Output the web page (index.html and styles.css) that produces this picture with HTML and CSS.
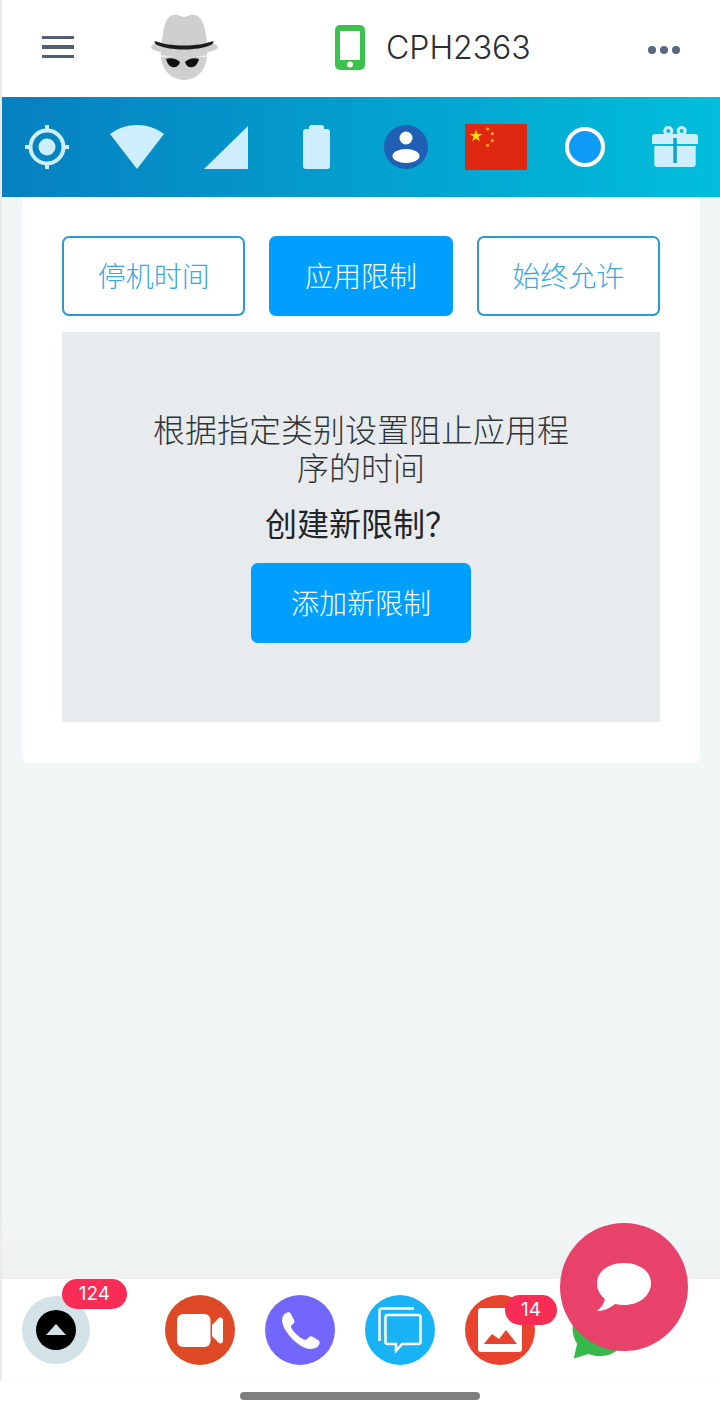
FILE: index.html
```html
<!DOCTYPE html>
<html lang="zh-CN">
<head>
    <meta charset="UTF-8">
    <title>应用限制</title>
    <link rel="stylesheet" href="styles.css">
</head>
<body>
    <div class="app">
        <header class="topbar">
            <button class="menu-btn"><span></span><span></span><span></span></button>
            <svg class="spy" width="67" height="66" viewBox="0 0 67 66">
                <path d="M11 30 C12 16 14 3 22 1 C27 0 29 3 33 3 C37 3 39 0 44 1 C52 3 55 16 56 30 Z" fill="#cfcfcf"/>
                <path d="M10 38 H56 C57 55 46 66 33 66 C20 66 9 55 10 38 Z" fill="#cfcfcf"/>
                <ellipse cx="33.500" cy="33" rx="33.500" ry="7.500" fill="#cfcfcf"/>
                <path d="M4 27 C18 33 48 33 62 27 C63 28 62 30 60 31 C46 37 20 37 6 31 C4 30 3 28 4 27 Z" fill="#1c1c1c"/>
                <path d="M10 41 C24 44 42 44 56 41 V43 H10 Z" fill="#eeeeee"/>
                <path d="M15 45 C20 43 26 45 29 48 C28 52 25 54 21 53 C18 52 16 49 15 45 Z M34 48 C37 45 43 43 48 45 C47 49 45 52 42 53 C38 54 35 52 34 48 Z" fill="#111"/>
            </svg>
            <div class="device">
                <svg width="30" height="45" viewBox="0 0 30 45">
                    <rect x="0" y="0" width="30" height="45" rx="5" fill="#3cc04e"/>
                    <rect x="5" y="6" width="20" height="29" fill="#fff"/>
                    <circle cx="15" cy="39.500" r="3" fill="#fff"/>
                </svg>
                <span class="device-name">CPH2363</span>
            </div>
            <div class="more"><i></i><i></i><i></i></div>
        </header>

        <nav class="status">
            <svg width="46" height="46" viewBox="0 0 46 46">
                <circle cx="23" cy="23" r="16.500" fill="none" stroke="#cdeefa" stroke-width="4"/>
                <circle cx="23" cy="23" r="8.500" fill="#cdeefa"/>
                <path d="M23 1 V7 M23 39 V45 M1 23 H7 M39 23 H45" stroke="#cdeefa" stroke-width="4"/>
            </svg>
            <svg width="54" height="44" viewBox="0 0 54 44">
                <path d="M0 9 C16 -3 38 -3 54 9 L27 44 Z" fill="#cdeefa"/>
            </svg>
            <svg width="44" height="44" viewBox="0 0 44 44">
                <path d="M44 1 V44 H0 Z" fill="#cdeefa"/>
            </svg>
            <svg width="27" height="44" viewBox="0 0 27 44">
                <path d="M6 2 C6 1 7 0 8 0 H19 C20 0 21 1 21 2 V4 H24 C26 4 27 5 27 7 V41 C27 43 26 44 24 44 H3 C1 44 0 43 0 41 V7 C0 5 1 4 3 4 H6 Z" fill="#cdeefa"/>
            </svg>
            <svg width="44" height="44" viewBox="0 0 44 44">
                <circle cx="22" cy="22" r="22" fill="#1f5fb4"/>
                <circle cx="22" cy="13" r="6.500" fill="#fff"/>
                <ellipse cx="22" cy="31" rx="13.500" ry="7" fill="#fff"/>
            </svg>
            <svg width="62" height="46" viewBox="0 0 62 46">
                <rect width="62" height="46" fill="#de2910"/>
                <path d="M11 5.500 L12.500 10 H17.200 L13.400 12.800 L14.800 17.300 L11 14.500 L7.200 17.300 L8.600 12.800 L4.800 10 H9.500 Z" fill="#ffde00"/>
                <circle cx="22.700" cy="5" r="1.600" fill="#f5a623"/>
                <circle cx="27.300" cy="9.700" r="1.600" fill="#f5a623"/>
                <circle cx="27.300" cy="16.700" r="1.600" fill="#f5a623"/>
                <circle cx="22.700" cy="21.300" r="1.600" fill="#f5a623"/>
            </svg>
            <svg width="40" height="40" viewBox="0 0 40 40">
                <circle cx="20" cy="20" r="18" fill="#0d9bf5" stroke="#fff" stroke-width="4"/>
            </svg>
            <svg width="46" height="42" viewBox="0 0 46 42">
                <circle cx="16.300" cy="5" r="3.500" fill="none" stroke="#cdeefa" stroke-width="3"/>
                <circle cx="29.700" cy="5" r="3.500" fill="none" stroke="#cdeefa" stroke-width="3"/>
                <path d="M3 8 H43 C45 8 46 9 46 11 V18 H0 V11 C0 9 1 8 3 8 Z" fill="#cdeefa"/>
                <path d="M2.300 20 H43.700 V38 C43.700 40 42.700 41 40.700 41 H5.300 C3.300 41 2.300 40 2.300 38 Z" fill="#cdeefa"/>
                <rect x="21.300" y="12" width="3.500" height="25" fill="#0aa3cc"/>
            </svg>
        </nav>

        <main class="content">
            <section class="card">
                <div class="tabs">
                    <a class="tab">停机时间</a>
                    <a class="tab active">应用限制</a>
                    <a class="tab">始终允许</a>
                </div>
                <div class="panel">
                    <p class="panel-text">根据指定类别设置阻止应用程序的时间</p>
                    <p class="panel-ask">创建新限制？</p>
                    <button class="add-btn">添加新限制</button>
                </div>
            </section>
        </main>

        <footer class="dock">
            <div class="dock-item">
                <div class="up-btn"><span></span></div>
                <span class="badge badge-big">124</span>
            </div>
            <div class="apps">
                <div class="app-icon video">
                    <svg width="46" height="33" viewBox="0 0 46 33">
                        <rect x="0" y="0" width="33.500" height="33" rx="6" fill="#fff"/>
                        <path d="M35 11 L42 4 C44 3 46 4 46 6 V27 C46 29 44 30 42 29 L35 22 Z" fill="#fff"/>
                    </svg>
                </div>
                <div class="app-icon phone">
                    <svg width="40" height="37" viewBox="0 0 40 37">
                        <path d="M6 1 C8 0 10 0 11 2 L14 8 C15 10 14 11 13 12 L11 14 C11 16 13 19 16 22 C19 25 24 28 26 28 L29 25 C30 24 32 24 33 25 L38 28 C40 29 40 31 39 33 C37 36 33 37 30 37 C20 37 3 20 2 9 C2 5 3 3 6 1 Z" fill="#fff"/>
                    </svg>
                </div>
                <div class="app-icon chat">
                    <svg width="44" height="46" viewBox="0 0 44 46">
                        <path d="M1.500 34 V4 C1.500 2 2 1.500 4 1.500 H36" fill="none" stroke="#fff" stroke-width="2.500"/>
                        <path d="M10 8 H40 C42 8 42.500 8.500 42.500 10 V35 C42.500 36.500 42 37 40 37 H24 L18 44 V37 H10 C8 37 7.500 36.500 7.500 35 V10 C7.500 8.500 8 8 10 8 Z" fill="none" stroke="#fff" stroke-width="2.500"/>
                    </svg>
                </div>
                <div class="app-icon gallery">
                    <svg width="44" height="44" viewBox="0 0 44 44">
                        <rect x="0" y="0" width="44" height="44" rx="3" fill="#fff"/>
                        <path d="M5.700 36 L14 26 L21 31 L28 22 L39 36 Z" fill="#e8432d"/>
                    </svg>
                    <span class="badge badge-small">14</span>
                </div>
                <div class="app-icon whatsapp">
                    <svg width="64" height="64" viewBox="0 0 56 56">
                        <path d="M28 3 C14 3 4 14 4 27 C4 32 6 37 8 40 L5 53 L18 49 C21 50 24 51 28 51 C42 51 52 40 52 27 C52 14 42 3 28 3 Z" fill="#36b94a"/>
                    </svg>
                </div>
            </div>
        </footer>
        <div class="home-area"><span class="home-bar"></span></div>

        <button class="fab">
            <svg width="54" height="48" viewBox="0 0 54 48">
                <path d="M27 0 C42 0 54 8 54 20 C54 33 42 42 27 42 C24 42 21 41.500 18 41 C13 45 7 48 0 48 C4 45 7 41 8 36 C3 32 0 27 0 20 C0 8 12 0 27 0 Z" fill="#fff"/>
            </svg>
        </button>
    </div>
</body>
</html>
```

FILE: styles.css
```css
* {
    box-sizing: border-box;
}

body {
    margin: 0;
    font-family: "Noto Sans CJK SC", "Noto Sans", sans-serif;
    font-weight: 300;
    background-color: #fff;
}

.app {
    position: relative;
    width: 720px;
    height: 1414px;
    display: flex;
    flex-direction: column;
    overflow: hidden;
}

.topbar, .status, .content, .dock {
    border-left: 2px solid #e9ebec;
}

/* top bar */
.topbar {
    height: 97px;
    background-color: #fff;
    display: flex;
    align-items: center;
    padding: 0 40px 3px 40px;
}

.menu-btn {
    width: 32px;
    display: flex;
    flex-direction: column;
    gap: 6px;
    padding: 0;
    border: none;
    background: none;
}

.menu-btn span {
    height: 3.500px;
    background-color: #525f73;
}

.spy {
    margin-left: 77px;
}

.device {
    display: flex;
    align-items: center;
    gap: 21px;
    margin-left: 117px;
}

.device-name {
    font-family: Inter, sans-serif;
    font-size: 32px;
    font-weight: 300;
    color: #2b2f33;
}

.more {
    display: flex;
    gap: 4px;
    margin-left: auto;
    padding-top: 5px;
}

.more i {
    width: 8px;
    height: 8px;
    border-radius: 50%;
    background-color: #5b677c;
}

/* status icons */
.status {
    height: 100px;
    display: grid;
    grid-template-columns: repeat(8, 1fr);
    align-items: center;
    justify-items: center;
    background: linear-gradient(90deg, #0680c0, #01bedb);
}

/* content */
.content {
    flex: 1;
    padding: 0 20px;
    background: linear-gradient(180deg, #f1f6f7 0, #f1f6f7 1020px, #eef0f1 100%);
}

.card {
    width: 678px;
    padding: 39px 40px 41px;
    background-color: #fff;
    border-radius: 0 0 8px 8px;
}

.tabs {
    display: flex;
    gap: 24px;
    margin-bottom: 16px;
}

.tab {
    flex: 1;
    height: 80px;
    display: flex;
    align-items: center;
    justify-content: center;
    padding-bottom: 3px;
    border: 2px solid #2b98d8;
    border-radius: 7px;
    font-size: 28px;
    color: #3ba7de;
}

.tab.active {
    background-color: #019ffd;
    border-color: #019ffd;
    color: #fff;
}

.panel {
    height: 390px;
    padding-top: 77px;
    background-color: #e7ebed;
    display: flex;
    flex-direction: column;
    align-items: center;
    text-align: center;
}

.panel-text {
    width: 420px;
    margin: 0;
    font-size: 32px;
    line-height: 38px;
    color: #2f3437;
}

.panel-ask {
    margin: 18px 0 0;
    font-size: 32px;
    line-height: 38px;
    font-weight: 400;
    color: #212529;
}

.add-btn {
    width: 220px;
    height: 80px;
    margin-top: 22px;
    padding-bottom: 3px;
    border: none;
    border-radius: 7px;
    background-color: #019ffd;
    color: #fff;
    font-family: inherit;
    font-size: 28px;
    font-weight: 300;
}

/* bottom dock */
.dock {
    height: 102px;
    display: flex;
    align-items: center;
    background-color: #fff;
}

.dock-item {
    position: relative;
    margin-left: 20px;
}

.up-btn {
    width: 68px;
    height: 68px;
    border-radius: 50%;
    background-color: #d3e2e6;
    display: flex;
    align-items: center;
    justify-content: center;
}

.up-btn span {
    width: 40px;
    height: 40px;
    border-radius: 50%;
    background-color: #000;
    position: relative;
}

.up-btn span::after {
    content: "";
    position: absolute;
    left: 10px;
    top: 14px;
    border-left: 10px solid transparent;
    border-right: 10px solid transparent;
    border-bottom: 11px solid #d3e2e6;
}

.badge {
    position: absolute;
    height: 30px;
    border-radius: 15px;
    background-color: #f72d56;
    color: #fff;
    font-family: Inter, sans-serif;
    font-size: 19px;
    font-weight: 400;
    line-height: 30px;
    text-align: center;
}

.badge-big {
    left: 40px;
    top: -17px;
    width: 65px;
}

.badge-small {
    left: 40px;
    top: 0;
    width: 52px;
}

.apps {
    display: flex;
    gap: 30px;
    margin-left: 75px;
}

.app-icon {
    position: relative;
    width: 70px;
    height: 70px;
    border-radius: 50%;
    display: flex;
    align-items: center;
    justify-content: center;
}

.video {
    background-color: #dd4a25;
}

.phone {
    background-color: #7367fb;
}

.chat {
    background-color: #18b3f5;
}

.gallery {
    background-color: #e8432d;
}

.home-area {
    height: 33px;
    background-color: #fff;
    border-top: 1px solid #f8f9f9;
    display: flex;
    justify-content: center;
    padding-top: 10px;
}

.home-bar {
    width: 240px;
    height: 8px;
    border-radius: 4px;
    background-color: #7f7f7f;
}

/* floating chat button */
.fab {
    position: absolute;
    left: 560px;
    top: 1223px;
    width: 128px;
    height: 128px;
    border: none;
    border-radius: 50%;
    background-color: #e9426a;
    display: flex;
    align-items: center;
    justify-content: center;
    padding: 0;
}
```
